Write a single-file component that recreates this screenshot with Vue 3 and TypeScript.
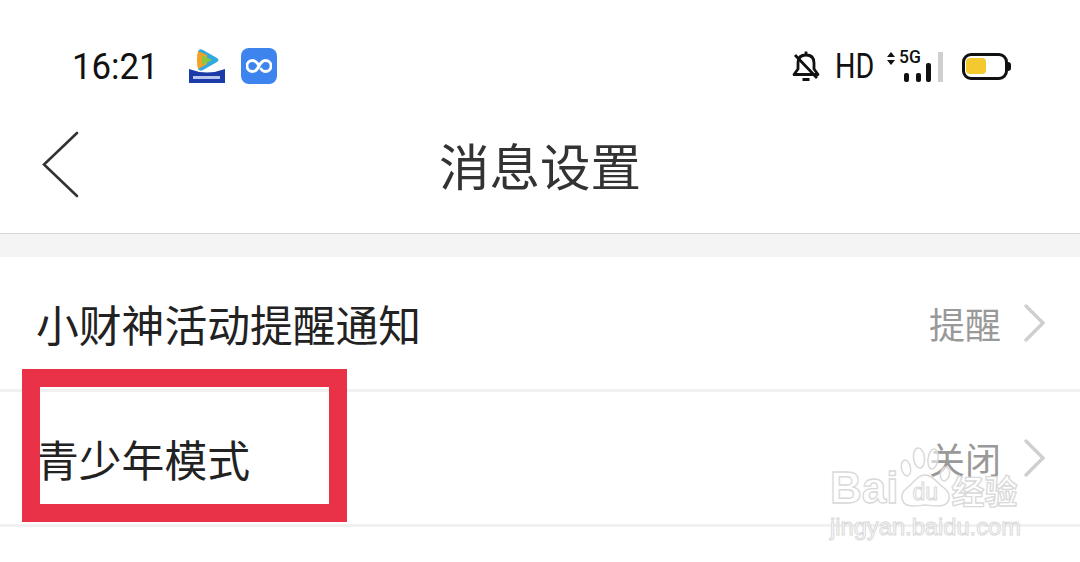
<script setup lang="ts">
interface SettingRow {
  label: string
  value: string
}

const rows: SettingRow[] = [
  { label: '小财神活动提醒通知', value: '提醒' },
  { label: '青少年模式', value: '关闭' },
]
</script>

<template>
  <div class="screen">
    <header class="status-bar">
      <div class="status-left">
        <span class="time">16:21</span>
        <svg class="app-video" width="38" height="35" viewBox="0 0 38 35">
          <path d="M10 2 Q12 -1 15 1 L29 9 Q32 11 29 13 L15 21 Q12 23 10 20Z" fill="#2fa9e0" />
          <path d="M10 2 Q8 11 10 20 L19 15 L19 6Z" fill="#f4a024" />
          <path d="M14 6 L24 11 L14 16Z" fill="#8cc63f" />
          <path d="M1 20 Q19 27 37 20 V34 H1Z" fill="#1b3ca8" />
          <rect x="5" y="27" width="27" height="3" fill="#b9c6ee" />
        </svg>
        <div class="app-loop">
          <svg width="26" height="16" viewBox="0 0 26 16">
            <path d="M13 8 C11 4 9 2.500 6.500 2.500 A5.500 5.500 0 0 0 6.500 13.500 C9 13.500 11 12 13 8 C15 4 17 2.500 19.500 2.500 A5.500 5.500 0 0 1 19.500 13.500 C17.500 13.500 16 12.500 15 11" fill="none" stroke="#fff" stroke-width="2.800" stroke-linecap="round" />
          </svg>
        </div>
      </div>
      <div class="status-right">
        <svg class="bell" width="28" height="30" viewBox="0 0 28 30">
          <path d="M2 23.500 H26 L22 18 V12 Q22 4 14 4 Q6 4 6 12 V18Z" fill="none" stroke="#111" stroke-width="2.800" stroke-linejoin="round" />
          <path d="M14 0.500 V4 M10.500 28.500 H17.500 M3 4 L25 27" fill="none" stroke="#111" stroke-width="2.800" />
        </svg>
        <span class="hd">HD</span>
        <div class="signal">
          <span class="arrows">
            <i class="arrow-up"></i>
            <i class="arrow-down"></i>
          </span>
          <span class="net">5G</span>
          <i class="bar bar-1"></i>
          <i class="bar bar-2"></i>
          <i class="bar bar-3"></i>
          <i class="bar bar-4"></i>
        </div>
        <div class="battery">
          <div class="battery-body"><i class="battery-level"></i></div>
          <i class="battery-tip"></i>
        </div>
      </div>
    </header>

    <nav class="nav-bar">
      <svg class="back" width="38" height="68" viewBox="0 0 38 68">
        <path d="M35 2 L2 33.500 L35 65" fill="none" stroke="#333" stroke-width="2.600" stroke-linecap="round" stroke-linejoin="miter" />
      </svg>
      <h1 class="title">消息设置</h1>
    </nav>

    <div class="gap"></div>

    <ul class="list">
      <li v-for="row in rows" :key="row.label" class="row">
        <span class="row-label">{{ row.label }}</span>
        <span class="row-value">{{ row.value }}</span>
        <svg class="chevron" width="22" height="38" viewBox="0 0 22 38">
          <path d="M2 2 L19 19 L2 36" fill="none" stroke="#cfcfcf" stroke-width="3.400" stroke-linecap="round" />
        </svg>
      </li>
    </ul>

    <div class="highlight"></div>

    <div class="watermark">
      <div class="wm-main">
        <span class="wm-text">Bai</span>
        <div class="wm-paw">
          <svg width="51" height="60" viewBox="0 0 51 60">
            <g fill="#fff" fill-opacity="0.55" stroke="#d9d9d9" stroke-width="1.500">
              <ellipse cx="6" cy="21" rx="4.500" ry="8" transform="rotate(-12 6 21)" />
              <ellipse cx="19" cy="11" rx="5.500" ry="10" transform="rotate(-6 19 11)" />
              <ellipse cx="33" cy="12" rx="5" ry="10" transform="rotate(8 33 12)" />
              <ellipse cx="45" cy="27" rx="4.500" ry="7" transform="rotate(14 45 27)" />
              <path d="M25 28 C17 28 14 36 7 41 C-1 47 0 59 13 59 C19 59 22 58 25 58 C28 58 32 59 38 59 C51 59 52 47 44 41 C37 36 33 28 25 28Z" />
            </g>
          </svg>
          <span class="wm-du">du</span>
        </div>
        <span class="wm-text wm-cjk">经验</span>
      </div>
      <div class="wm-url">jingyan.baidu.com</div>
    </div>
  </div>
</template>

<style>
html,
body {
  margin: 0;
  background: #fff;
  overflow: hidden;
}
</style>

<style scoped>
.screen {
  position: relative;
  display: flex;
  flex-direction: column;
  width: 1080px;
  height: 562px;
  overflow: hidden;
  background: #fff;
  font-family: "Noto Sans CJK SC", "Liberation Sans", sans-serif;
}

.status-bar {
  display: flex;
  align-items: center;
  justify-content: space-between;
  flex: none;
  height: 132px;
  padding: 0 69px 0 71px;
  box-sizing: border-box;
}

.status-left,
.status-right {
  display: flex;
  align-items: center;
}

.time {
  width: 117px;
  padding-left: 1px;
  box-sizing: border-box;
  color: #111;
  font-family: "Roboto", "Liberation Sans", sans-serif;
  font-size: 37px;
  transform: scaleX(0.94);
  transform-origin: left;
}

.app-video {
  margin-right: 15px;
}

.app-loop {
  display: flex;
  align-items: center;
  justify-content: center;
  width: 36px;
  height: 36px;
  border-radius: 8px;
  background: #3d84ee;
}

.bell {
  margin-right: 15px;
}

.hd {
  width: 51px;
  color: #111;
  font-family: "Roboto", "Liberation Sans", sans-serif;
  font-size: 35px;
  transform: scaleX(0.82);
  transform-origin: left;
}

.signal {
  position: relative;
  width: 57px;
  height: 32px;
  margin-right: 19px;
}

.arrows {
  position: absolute;
  left: 1px;
  top: 2px;
  display: flex;
  flex-direction: column;
  gap: 3px;
}

.arrow-up,
.arrow-down {
  width: 0;
  height: 0;
  border-left: 4px solid transparent;
  border-right: 4px solid transparent;
}

.arrow-up {
  border-bottom: 5px solid #111;
}

.arrow-down {
  border-top: 5px solid #111;
}

.net {
  position: absolute;
  left: 13px;
  top: -5px;
  color: #111;
  font-family: "Roboto", "Liberation Sans", sans-serif;
  font-size: 19px;
  font-weight: 500;
  transform: scaleX(0.92);
  transform-origin: left;
}

.bar {
  position: absolute;
  bottom: 0;
  width: 5px;
  border-radius: 2px;
  background: #111;
}

.bar-1 {
  left: 18px;
  height: 9px;
}

.bar-2 {
  left: 30px;
  height: 9px;
}

.bar-3 {
  left: 40px;
  height: 19px;
}

.bar-4 {
  left: 52px;
  height: 30px;
  background: #cfcfcf;
  border-radius: 0;
}

.battery {
  display: flex;
  align-items: center;
}

.battery-body {
  display: flex;
  align-items: center;
  width: 46px;
  height: 27px;
  padding: 0 1px;
  box-sizing: border-box;
  border: 3px solid #111;
  border-radius: 9px;
}

.battery-level {
  width: 20px;
  height: 16px;
  border-radius: 4px;
  background: #f4c92f;
}

.battery-tip {
  width: 3px;
  height: 9px;
  border-radius: 0 3px 3px 0;
  background: #111;
}

.nav-bar {
  display: grid;
  grid-template-columns: 1fr auto 1fr;
  grid-template-rows: 66px;
  align-items: center;
  flex: none;
  height: 102px;
  padding-left: 42px;
  box-sizing: border-box;
  border-bottom: 1px solid #d6d6d6;
}

.title {
  margin: 0 0 2px -42px;
  color: #333;
  font-size: 50.500px;
  font-weight: 400;
  line-height: 70px;
}

.gap {
  flex: none;
  height: 23px;
  background: #f4f4f4;
}

.list {
  margin: 0;
  padding: 0;
  list-style: none;
}

.row {
  display: flex;
  align-items: center;
  height: 132px;
  padding: 0 34px 0 36px;
  border-bottom: 3px solid #f1f1f1;
}

.row-label {
  flex: 1;
  color: #222;
  font-size: 42.800px;
  line-height: 60px;
}

.row-value {
  margin-right: 23px;
  color: #999;
  font-size: 36px;
  line-height: 50px;
}

.highlight {
  position: absolute;
  left: 22px;
  top: 369px;
  width: 289px;
  height: 117px;
  border: 18px solid #e93147;
}

.watermark {
  position: absolute;
  left: 830px;
  top: 447px;
  width: 196px;
}

.wm-main {
  display: flex;
  align-items: flex-end;
  height: 60px;
}

.wm-text {
  color: rgba(255, 255, 255, 0.55);
  font-family: "Liberation Sans", sans-serif;
  font-size: 44px;
  font-weight: 700;
  line-height: 38px;
  -webkit-text-stroke: 1.300px #d9d9d9;
}

.wm-cjk {
  margin-left: 0;
  font-family: "Noto Sans CJK SC", sans-serif;
  font-size: 33px;
  line-height: 34px;
}

.wm-paw {
  position: relative;
  flex: none;
  width: 51px;
  height: 60px;
  margin-left: 2px;
}

.wm-paw svg {
  display: block;
}

.wm-du {
  position: absolute;
  left: 12px;
  top: 32px;
  color: rgba(255, 255, 255, 0.55);
  font-family: "Liberation Sans", sans-serif;
  font-size: 23px;
  line-height: 26px;
  -webkit-text-stroke: 1px #d9d9d9;
}

.wm-url {
  margin-top: 8px;
  color: rgba(255, 255, 255, 0.6);
  font-family: "Liberation Sans", sans-serif;
  font-size: 23.700px;
  line-height: 24px;
  white-space: nowrap;
  -webkit-text-stroke: 1px #d9d9d9;
}
</style>
